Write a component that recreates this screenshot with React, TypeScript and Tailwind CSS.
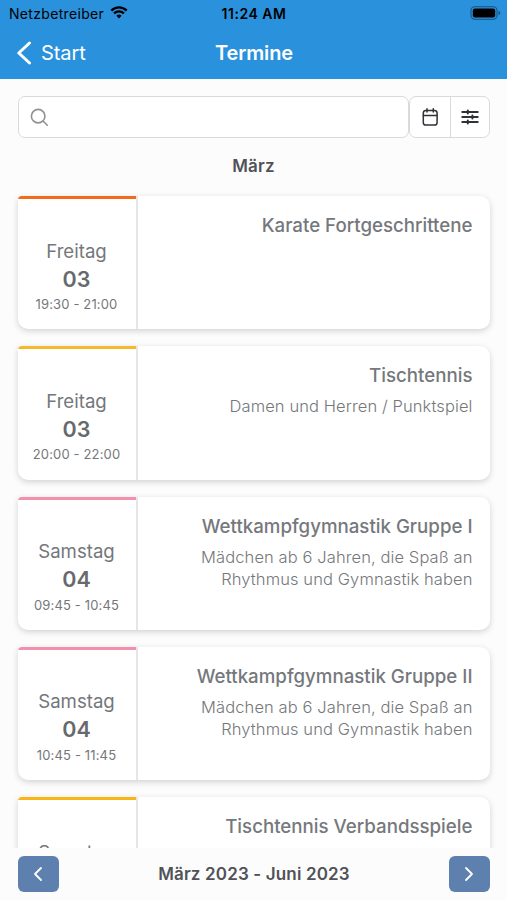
import { useState } from 'react';

interface Appointment {
  id: number;
  day: string;
  date: string;
  time: string;
  title: string;
  description?: string;
  accent: string;
}

const appointments: Appointment[] = [
  { id: 1, day: 'Freitag', date: '03', time: '19:30 - 21:00', title: 'Karate Fortgeschrittene', accent: 'bg-[#f26a1b]' },
  { id: 2, day: 'Freitag', date: '03', time: '20:00 - 22:00', title: 'Tischtennis', description: 'Damen und Herren / Punktspiel', accent: 'bg-[#f3bb2c]' },
  { id: 3, day: 'Samstag', date: '04', time: '09:45 - 10:45', title: 'Wettkampfgymnastik Gruppe I', description: 'Mädchen ab 6 Jahren, die Spaß an Rhythmus und Gymnastik haben', accent: 'bg-[#f291ae]' },
  { id: 4, day: 'Samstag', date: '04', time: '10:45 - 11:45', title: 'Wettkampfgymnastik Gruppe II', description: 'Mädchen ab 6 Jahren, die Spaß an Rhythmus und Gymnastik haben', accent: 'bg-[#f291ae]' },
  { id: 5, day: 'Samstag', date: '', time: '', title: 'Tischtennis Verbandsspiele', accent: 'bg-[#f9b517]' },
];

function StatusBar() {
  return (
    <div className="grid h-[27px] grid-cols-3 items-center pl-[9px] pr-[6px] text-black">
      <div className="flex items-center gap-[6px]">
        <span className="text-[14px] tracking-[0.32px]">Netzbetreiber</span>
        <svg width="18" height="13" viewBox="0 0 19 14" fill="none" stroke="currentColor" strokeWidth="2.5" className="-mt-[2px]">
          <path d="M1.2 4.9a11.8 11.8 0 0 1 16.6 0" />
          <path d="M4.2 8a7.5 7.5 0 0 1 10.6 0" />
          <path d="M9.5 13.4 6.7 10.6a4 4 0 0 1 5.6 0Z" fill="currentColor" stroke="none" />
        </svg>
      </div>
      <span className="-ml-[2px] text-center text-[14px] font-semibold tracking-[0.5px]">11:24 AM</span>
      <div className="flex justify-end">
        <svg width="31" height="14" viewBox="0 0 31 14" fill="none" className="-mt-px">
          <rect x="1" y="0.8" width="26" height="12.4" rx="3.6" stroke="#1a5380" strokeWidth="1.1" />
          <rect x="2.8" y="2.5" width="22.4" height="9" rx="2" fill="#000" />
          <path d="M28.5 4.8v4.4c1.2-.5 1.7-1.3 1.7-2.2s-.5-1.7-1.7-2.2Z" fill="#1a5380" />
        </svg>
      </div>
    </div>
  );
}

function Header() {
  return (
    <header className="h-[79px] shrink-0 bg-[#2a91dc]">
      <StatusBar />
      <div className="grid h-[51px] grid-cols-3 items-center text-white">
        <button className="flex items-center gap-[9px] pl-[16px]">
          <svg width="16" height="24" viewBox="0 0 16 24" fill="none" stroke="currentColor" strokeWidth="3" strokeLinecap="round" strokeLinejoin="round">
            <path d="M13.5 2 2.8 12l10.7 10" />
          </svg>
          <span className="text-[20px] tracking-[-0.1px]">Start</span>
        </button>
        <h1 className="pl-px text-center text-[20px] font-semibold tracking-[-0.1px]">Termine</h1>
      </div>
    </header>
  );
}

function SearchRow() {
  return (
    <div className="flex h-[42px] shrink-0">
      <label className="flex flex-1 items-center rounded-[7px] border-[1.5px] border-[#d9dadc] bg-white pl-[11px]">
        <svg width="19" height="19" viewBox="0 0 20 20" fill="none" stroke="#8f9194" strokeWidth="1.7" strokeLinecap="round">
          <circle cx="8.6" cy="8.6" r="7.1" />
          <path d="m13.9 13.9 4.3 4.3" />
        </svg>
        <input className="min-w-0 flex-1 bg-transparent px-2 outline-none" />
      </label>
      <div className="flex w-[81px] rounded-[7px] border-[1.5px] border-[#d9dadc] bg-white text-[#303236]">
        <button className="flex w-[41px] items-center justify-center border-r-[1.5px] border-[#d9dadc]">
          <svg width="18" height="20" viewBox="0 0 18 20" fill="none" stroke="currentColor" strokeWidth="1.5" strokeLinecap="round">
            <rect x="2.3" y="3.4" width="13.8" height="14.6" rx="2.6" />
            <path d="M2.3 8.5h13.8M6 1.7v3.4M12.3 1.7v3.4" />
          </svg>
        </button>
        <button className="flex flex-1 items-center justify-center">
          <svg width="18" height="18" viewBox="0 0 18 18" fill="none" stroke="currentColor" strokeWidth="1.8" strokeLinecap="round">
            <path d="M1.2 4h15.6M1.2 9h15.6M1.2 14h15.6" />
            <path d="M6.8 2.5v3M11.4 7.5v3M6.8 12.5v3" strokeWidth="2" />
          </svg>
        </button>
      </div>
    </div>
  );
}

function AppointmentCard({ item }: { item: Appointment }) {
  return (
    <article className="flex h-[133.3px] shrink-0 overflow-hidden rounded-[10px] rounded-tl-[4px] bg-white shadow-[0_2px_6px_rgba(0,0,0,0.17)]">
      <div className="flex w-[120px] shrink-0 flex-col border-r-2 border-[#e6e6e7]">
        <div className={`h-[3px] shrink-0 ${item.accent}`} />
        <div className="flex flex-col items-center pt-[37.5px] text-[#74777b]">
          <span className="text-[18.6px] leading-[28px]">{item.day}</span>
          <span className="text-[21.5px] leading-[29.5px] font-semibold text-[#67696d]">{item.date}</span>
          <span className="text-[13px] leading-[21px] tracking-[0.15px]">{item.time}</span>
        </div>
      </div>
      <div className="flex-1 pt-[16px] pr-[17px] pl-[30px] text-right">
        <h3 className="text-[18.7px] leading-[28px] font-medium text-[#75787c]">{item.title}</h3>
        {item.description && (
          <p className="mt-[5px] text-[16.5px] leading-[22px] font-light tracking-[0.1px] text-[#75777a]">{item.description}</p>
        )}
      </div>
    </article>
  );
}

function Footer({ onPrev, onNext }: { onPrev: () => void; onNext: () => void }) {
  return (
    <footer className="flex h-[52px] shrink-0 items-center justify-between bg-[#fcfcfc] pr-[17px] pl-[18px]">
      <button onClick={onPrev} className="flex h-9 w-[41px] items-center justify-center rounded-md bg-[#5e80ae] pr-[2px] text-white">
        <svg width="10" height="16" viewBox="0 0 10 16" fill="none" stroke="currentColor" strokeWidth="1.8" strokeLinecap="round" strokeLinejoin="round">
          <path d="M8 2 2 8l6 6" />
        </svg>
      </button>
      <span className="pt-px text-[17px] font-semibold tracking-[0.15px] text-[#505257]">März 2023 - Juni 2023</span>
      <button onClick={onNext} className="flex h-9 w-[41px] items-center justify-center rounded-md bg-[#5e80ae] text-white">
        <svg width="10" height="16" viewBox="0 0 10 16" fill="none" stroke="currentColor" strokeWidth="1.8" strokeLinecap="round" strokeLinejoin="round">
          <path d="m2 2 6 6-6 6" />
        </svg>
      </button>
    </footer>
  );
}

export default function App() {
  const [, setOffset] = useState(0);

  return (
    <div className="flex h-[900px] w-[507px] flex-col overflow-hidden bg-[#fcfcfc] font-['Inter',sans-serif]">
      <Header />
      <main className="flex min-h-0 flex-1 flex-col overflow-hidden px-[17.5px] pt-[17px]">
        <SearchRow />
        <h2 className="pt-[16px] pb-[18px] text-center text-[17px] leading-[24px] font-semibold tracking-[0.15px] text-[#505257]">März</h2>
        <div className="flex flex-col gap-[17px]">
          {appointments.map((item) => (
            <AppointmentCard key={item.id} item={item} />
          ))}
        </div>
      </main>
      <Footer onPrev={() => setOffset((o) => o - 1)} onNext={() => setOffset((o) => o + 1)} />
    </div>
  );
}
